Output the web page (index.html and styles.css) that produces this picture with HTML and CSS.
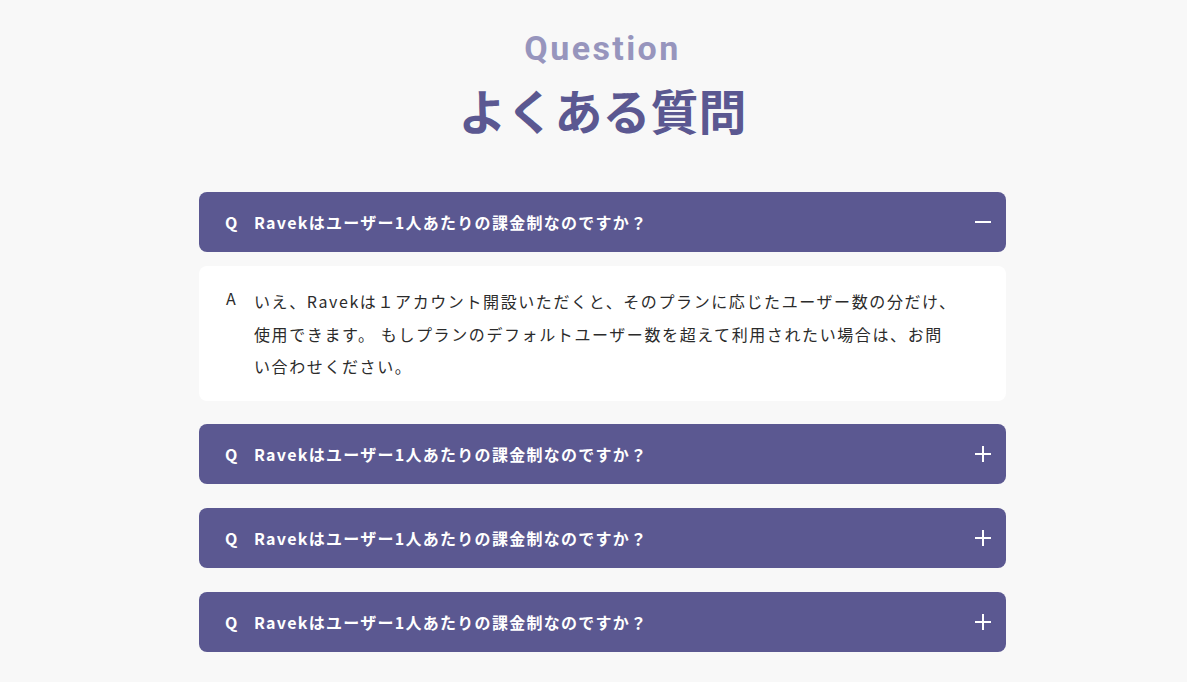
FILE: index.html
```html
<!DOCTYPE html>
<html lang="ja">
<head>
  <meta charset="UTF-8" />
  <meta name="viewport" content="width=device-width, initial-scale=1.0"/>
  <title>よくある質問</title>
  <link rel="stylesheet" href="styles.css">
</head>
<body>
  <section class="faq">
    <div class="faq-head">
      <p class="faq-sub">Question</p>
      <h2 class="faq-title">よくある質問</h2>
    </div>

    <div class="faq-list">
      <div class="faq-item open">
        <div class="faq-q">
          <span class="mark">Q</span>
          <span class="q-text">Ravekはユーザー1人あたりの課金制なのですか？</span>
          <span class="toggle minus"></span>
        </div>
        <div class="faq-a">
          <span class="mark">A</span>
          <p class="a-text">いえ、Ravekは１アカウント開設いただくと、そのプランに応じたユーザー数の分だけ、使用できます。 もしプランのデフォルトユーザー数を超えて利用されたい場合は、お問い合わせください。</p>
        </div>
      </div>

      <div class="faq-item">
        <div class="faq-q">
          <span class="mark">Q</span>
          <span class="q-text">Ravekはユーザー1人あたりの課金制なのですか？</span>
          <span class="toggle plus"></span>
        </div>
      </div>

      <div class="faq-item">
        <div class="faq-q">
          <span class="mark">Q</span>
          <span class="q-text">Ravekはユーザー1人あたりの課金制なのですか？</span>
          <span class="toggle plus"></span>
        </div>
      </div>

      <div class="faq-item">
        <div class="faq-q">
          <span class="mark">Q</span>
          <span class="q-text">Ravekはユーザー1人あたりの課金制なのですか？</span>
          <span class="toggle plus"></span>
        </div>
      </div>
    </div>
  </section>
</body>
</html>
```

FILE: styles.css
```css
:root {
  --main: #5b5891;
  --sub: #9795bd;
}
body {
  margin: 0;
  background-color: #f8f8f8;
  font-family: "Noto Sans CJK JP", "Noto Sans", sans-serif;
  color: #333;
}
.faq {
  padding: 28px 0 0 18px;
}
.faq-head {
  text-align: center;
  margin-bottom: 49px;
}
.faq-sub {
  margin: 0;
  font-family: Roboto, "Noto Sans", sans-serif;
  font-weight: bold;
  font-size: 34px;
  line-height: 41px;
  letter-spacing: 2.4px;
  color: var(--sub);
}
.faq-title {
  margin: 7px 0 0;
  font-size: 48px;
  line-height: 67px;
  font-weight: bold;
  color: var(--main);
}
.faq-list {
  width: 807px;
  margin: 0 auto;
  display: flex;
  flex-direction: column;
  gap: 24px;
}
.faq-item {
  display: flex;
  flex-direction: column;
  gap: 14px;
}
.faq-item.open {
  margin-bottom: -1px;
}
.faq-q {
  display: flex;
  align-items: center;
  height: 60px;
  padding: 0 15px 0 26px;
  background-color: var(--main);
  border-radius: 8px;
  color: #fff;
  font-weight: bold;
  font-size: 16px;
  letter-spacing: 0.08em;
}
.mark {
  width: 29px;
  flex-shrink: 0;
}
.q-text {
  flex: 1;
}
.toggle {
  position: relative;
  width: 16px;
  height: 16px;
}
.toggle::before,
.toggle::after {
  content: "";
  position: absolute;
  background-color: #fff;
}
.toggle::before {
  left: 0;
  top: 7px;
  width: 16px;
  height: 2px;
}
.plus::after {
  left: 7px;
  top: 0;
  width: 2px;
  height: 16px;
}
.faq-a {
  display: flex;
  padding: 19px 46px 18px 27px;
  background-color: #fff;
  border-radius: 8px;
  font-size: 16px;
  letter-spacing: 0.1em;
  color: #2b2b2b;
}
.faq-a .mark {
  width: 28px;
  line-height: 26px;
  letter-spacing: 0;
}
.a-text {
  flex: 1;
  margin: 0;
  line-height: 32.5px;
}
```
